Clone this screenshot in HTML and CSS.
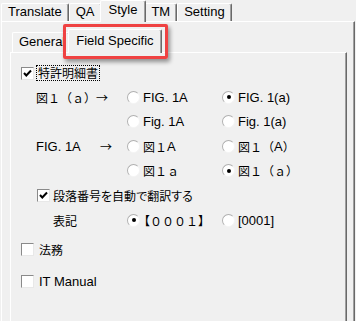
FILE: index.html
```html
<!DOCTYPE html>
<html lang="ja">
<head>
    <meta charset="UTF-8">
    <link rel="stylesheet" href="styles.css">
</head>
<body>
    <div class="tabstrip">
        <div class="tab">Translate</div>
        <div class="tab">QA</div>
        <div class="tab active">Style</div>
        <div class="tab">TM</div>
        <div class="tab">Setting</div>
    </div>
    <div class="panel">
        <div class="tabstrip sub">
            <div class="tab general">General</div>
            <div class="tab active">Field Specific<span class="callout"></span></div>
        </div>
        <div class="panel sub">
            <div class="check-row">
                <span class="box checked"><svg viewBox="0 0 11 11" width="11" height="11"><polyline points="2,5 4.3,7.5 9,2.5" fill="none" stroke="#000" stroke-width="2"/></svg></span>
                <span class="focus ja">特許明細書</span>
            </div>
            <div class="options">
                <span class="ja">図１（ａ）→</span>
                <span class="radio"><span class="dot"></span>FIG. 1A</span>
                <span class="radio"><span class="dot on"></span>FIG. 1(a)</span>

                <span></span>
                <span class="radio"><span class="dot"></span>Fig. 1A</span>
                <span class="radio"><span class="dot"></span>Fig. 1(a)</span>

                <span class="from"><span class="from-name">FIG. 1A</span><span class="ja">→</span></span>
                <span class="radio"><span class="dot"></span><span class="ja">図１</span>A</span>
                <span class="radio"><span class="dot"></span><span class="ja">図１（</span>A<span class="ja">）</span></span>

                <span></span>
                <span class="radio"><span class="dot"></span><span class="ja">図１ａ</span></span>
                <span class="radio"><span class="dot on"></span><span class="ja">図１（ａ）</span></span>

                <div class="check-row wide">
                    <span class="box checked"><svg viewBox="0 0 11 11" width="11" height="11"><polyline points="2,5 4.3,7.5 9,2.5" fill="none" stroke="#000" stroke-width="2"/></svg></span>
                    <span class="ja narrow">段落番号を自動で翻訳する</span>
                </div>

                <span class="ja indent">表記</span>
                <span class="radio"><span class="dot on"></span><span class="ja"><span class="open">【</span>０００１<span class="close">】</span></span></span>
                <span class="radio"><span class="dot"></span>[0001]</span>
            </div>
            <div class="check-row gap-a">
                <span class="box"></span>
                <span class="ja plain">法務</span>
            </div>
            <div class="check-row gap-b">
                <span class="box"></span>
                <span class="plain">IT Manual</span>
            </div>
        </div>
    </div>
</body>
</html>
```

FILE: styles.css
```css
body {
    margin: 0;
    background-color: #f0f0f0;
    font-family: "Liberation Sans", "Noto Sans CJK JP", sans-serif;
    font-size: 13px;
    color: #000;
    height: 321px;
    overflow: hidden;
}

.ja {
    font-family: "Noto Sans CJK JP", sans-serif;
    font-size: 12px;
}

.narrow {
    font-feature-settings: "palt";
}

.open {
    margin-left: -5px;
}

.close {
    margin-right: -5px;
}

/* tab strips */
.tabstrip {
    display: flex;
    align-items: flex-end;
    height: 21px;
    padding-left: 1px;
}

.tab {
    box-sizing: border-box;
    height: 18px;
    line-height: 16px;
    padding: 0 6px;
    background-color: #f0f0f0;
    border-top: 1px solid #fff;
    border-left: 1px solid #fff;
    border-right: 1px solid #696969;
    box-shadow: inset -1px 0 #a0a0a0;
    border-radius: 2px 2px 0 0;
    white-space: nowrap;
}

.tab.active {
    position: relative;
    z-index: 1;
    height: 22px;
    padding: 1px 8px 0;
    margin: 0 -2px -1px;
}

.tabstrip.sub {
    height: 22px;
    padding-left: 2px;
}

.tabstrip.sub .tab {
    height: 20px;
    line-height: 18px;
}

.tabstrip.sub .tab.general {
    padding: 0 4px 0 6px;
}

.tabstrip.sub .tab.active {
    height: 24px;
    padding: 2px 7px 0;
}

.callout {
    position: absolute;
    top: -6px;
    left: -6px;
    right: -7px;
    bottom: -6px;
    border: 3px solid #ef4242;
    border-radius: 2px;
    box-shadow: 2px 3px 4px rgba(0, 0, 0, 0.4);
}

/* panels */
.panel {
    box-sizing: border-box;
    width: 354px;
    height: 300px;
    margin-left: 1px;
    display: flex;
    flex-direction: column;
    padding: 8px 7px 0 8px;
    border-top: 1px solid #fff;
    border-left: 1px solid #fff;
    border-right: 1px solid #696969;
    box-shadow: inset -1px 0 #a0a0a0;
}

.panel.sub {
    width: auto;
    height: auto;
    flex: 1;
    margin-left: 0;
    padding: 8px 0 0 10px;
    display: block;
}

/* controls */
.check-row {
    display: flex;
    align-items: center;
    height: 24px;
    gap: 2px;
}

.box {
    box-sizing: border-box;
    width: 13px;
    height: 13px;
    background-color: #fff;
    border: 1px solid;
    border-color: #8a8a8a #e8e8e8 #e8e8e8 #8a8a8a;
    flex: none;
    display: flex;
}

.focus {
    border: 1px dotted #000;
    padding: 0 1px;
    line-height: 14px;
}

.plain {
    margin-left: 3px;
}

.gap-a {
    margin-top: 5px;
}

.gap-b {
    margin-top: 8px;
}

.options {
    display: grid;
    grid-template-columns: 91px 95px auto;
    grid-template-rows: 24px 25px 24px 25px 25px 24px;
    align-items: center;
    margin-left: 15px;
}

.options .wide {
    grid-column: 1 / -1;
    margin-left: 1px;
    gap: 3px;
}

.indent {
    padding-left: 17px;
}

.from {
    display: flex;
    align-items: center;
}

.from-name {
    width: 64px;
}

.radio {
    display: flex;
    align-items: center;
    white-space: nowrap;
}

.dot {
    box-sizing: border-box;
    width: 13px;
    height: 13px;
    margin-right: 3px;
    border-radius: 50%;
    background-color: #fff;
    border: 1px solid;
    border-color: #b0b0b0 #f4f4f4 #f4f4f4 #b0b0b0;
    display: flex;
    align-items: center;
    justify-content: center;
    flex: none;
}

.dot.on::after {
    content: "";
    width: 4px;
    height: 4px;
    border-radius: 50%;
    background-color: #000;
}
```
